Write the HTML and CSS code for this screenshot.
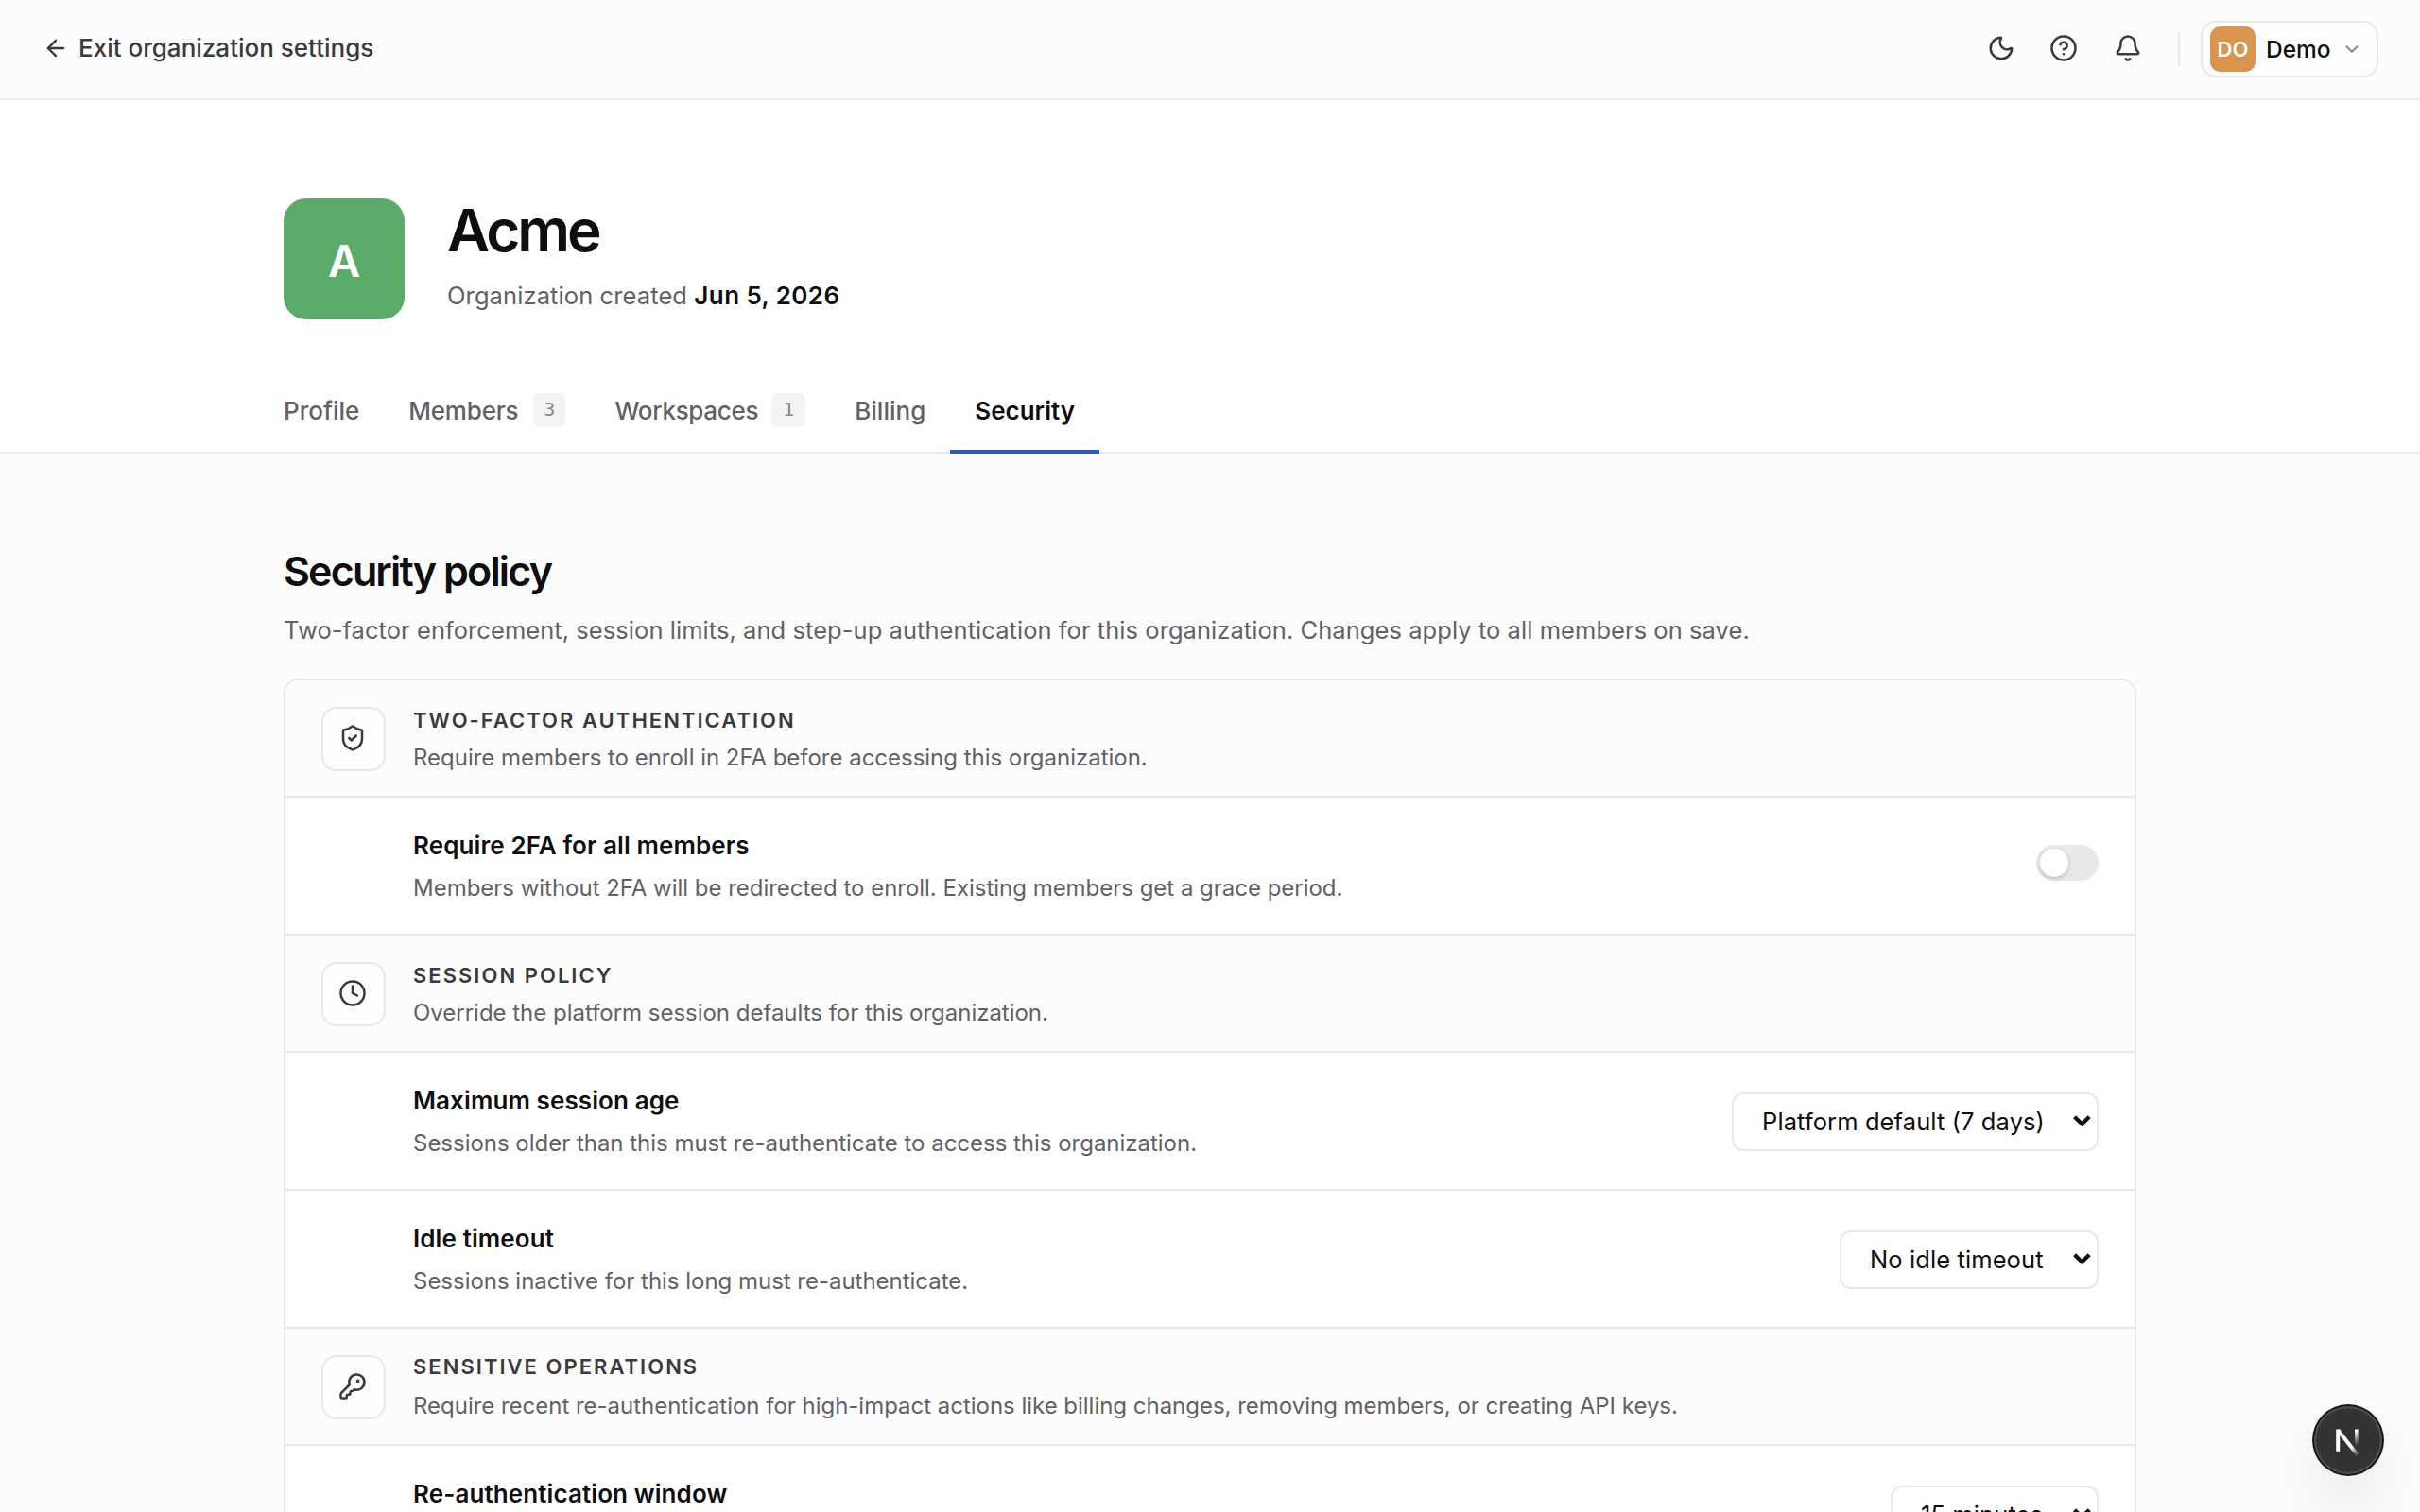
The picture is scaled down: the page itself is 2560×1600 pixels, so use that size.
FILE: index.html
```
<!DOCTYPE html>
<html lang="en">
<head>
    <meta charset="UTF-8">
    <meta name="viewport" content="width=device-width, initial-scale=1.0">
    <title>Organization security</title>
    <link rel="stylesheet" href="styles.css">
</head>
<body>
    <header class="topbar">
        <a class="exit-link">
            <svg class="icon icon-back" viewBox="0 0 24 24"><path d="m12 19-7-7 7-7"/><path d="M19 12H5"/></svg>
            Exit organization settings
        </a>
        <div class="topbar-actions">
            <svg class="icon" viewBox="0 0 24 24"><path d="M20.985 12.486a9 9 0 1 1-9.473-9.472c.405-.022.617.46.402.803a6 6 0 0 0 8.268 8.268c.344-.215.825-.004.803.401"/></svg>
            <svg class="icon icon-help" viewBox="0 0 24 24"><circle cx="12" cy="12" r="10"/><path d="M9.09 9a3 3 0 0 1 5.83 1c0 2-3 3-3 3"/><path d="M12 17h.01"/></svg>
            <svg class="icon icon-bell" viewBox="0 0 24 24"><path d="M10.268 21a2 2 0 0 0 3.464 0"/><path d="M3.262 15.326A1 1 0 0 0 4 17h16a1 1 0 0 0 .74-1.673C19.41 13.956 18 12.499 18 8A6 6 0 0 0 6 8c0 4.499-1.411 5.956-2.738 7.326"/></svg>
            <span class="divider"></span>
            <div class="user-menu">
                <span class="user-avatar">DO</span>
                <span class="user-name">Demo</span>
                <svg class="icon icon-chevron" viewBox="0 0 24 24"><path d="m6 9 6 6 6-6"/></svg>
            </div>
        </div>
    </header>

    <section class="hero">
        <div class="profile">
            <div class="org-avatar">A</div>
            <div class="org-text">
                <h1>Acme</h1>
                <p>Organization created <strong>Jun 5, 2026</strong></p>
            </div>
        </div>
        <nav class="tabs">
            <a class="tab">Profile</a>
            <a class="tab tab-members">Members <span class="count">3</span></a>
            <a class="tab tab-workspaces">Workspaces <span class="count count-wide">1</span></a>
            <a class="tab">Billing</a>
            <a class="tab active">Security</a>
        </nav>
    </section>

    <main class="content">
        <h2>Security policy</h2>
        <p class="lead">Two-factor enforcement, session limits, and step-up authentication for this organization. Changes apply to all members on save.</p>

        <div class="card">
            <div class="group">
                <div class="group-icon">
                    <svg class="icon" viewBox="0 0 24 24"><path d="M20 13c0 5-3.5 7.5-7.66 8.95a1 1 0 0 1-.67-.01C7.5 20.5 4 18 4 13V6a1 1 0 0 1 1-1c2 0 4.5-1.2 6.24-2.72a1.17 1.17 0 0 1 1.52 0C14.51 3.81 17 5 19 5a1 1 0 0 1 1 1z"/><path d="m9 12 2 2 4-4"/></svg>
                </div>
                <div class="group-text">
                    <h3>Two-factor authentication</h3>
                    <p>Require members to enroll in 2FA before accessing this organization.</p>
                </div>
            </div>
            <div class="row">
                <div class="row-text">
                    <h4>Require 2FA for all members</h4>
                    <p>Members without 2FA will be redirected to enroll. Existing members get a grace period.</p>
                </div>
                <div class="toggle"><span class="thumb"></span></div>
            </div>

            <div class="group">
                <div class="group-icon">
                    <svg class="icon" viewBox="0 0 24 24"><circle cx="12" cy="12" r="10"/><path d="M12 6v6l4 2"/></svg>
                </div>
                <div class="group-text">
                    <h3>Session policy</h3>
                    <p>Override the platform session defaults for this organization.</p>
                </div>
            </div>
            <div class="row">
                <div class="row-text">
                    <h4>Maximum session age</h4>
                    <p>Sessions older than this must re-authenticate to access this organization.</p>
                </div>
                <div class="select select-age">
                    Platform default (7 days)
                    <svg class="caret" viewBox="0 0 19 13"><path d="M1.6 1.8 9.4 9.4l7.8-7.6"/></svg>
                </div>
            </div>
            <div class="row">
                <div class="row-text">
                    <h4>Idle timeout</h4>
                    <p>Sessions inactive for this long must re-authenticate.</p>
                </div>
                <div class="select select-idle">
                    No idle timeout
                    <svg class="caret" viewBox="0 0 19 13"><path d="M1.6 1.8 9.4 9.4l7.8-7.6"/></svg>
                </div>
            </div>

            <div class="group group-sensitive">
                <div class="group-icon">
                    <svg class="icon" viewBox="0 0 24 24"><path d="M2.586 17.414A2 2 0 0 0 2 18.828V21a1 1 0 0 0 1 1h3a1 1 0 0 0 1-1v-1a1 1 0 0 1 1-1h1a1 1 0 0 0 1-1v-1a1 1 0 0 1 1-1h.172a2 2 0 0 0 1.414-.586l.814-.814a6.5 6.5 0 1 0-4-4z"/><circle cx="16.5" cy="7.5" r=".5" fill="currentColor"/></svg>
                </div>
                <div class="group-text">
                    <h3>Sensitive operations</h3>
                    <p>Require recent re-authentication for high-impact actions like billing changes, removing members, or creating API keys.</p>
                </div>
            </div>
            <div class="row row-window">
                <div class="row-text">
                    <h4>Re-authentication window</h4>
                </div>
                <div class="select select-window">
                    15 minutes
                    <svg class="caret" viewBox="0 0 19 13"><path d="M1.6 1.8 9.4 9.4l7.8-7.6"/></svg>
                </div>
            </div>
        </div>
    </main>

    <div class="dev-badge">
        <svg viewBox="0 0 72 72">
            <defs>
                <linearGradient id="fade-leg" gradientUnits="userSpaceOnUse" x1="36" y1="38" x2="47" y2="52">
                    <stop offset="0.35" stop-color="#fff"/>
                    <stop offset="1" stop-color="#fff" stop-opacity="0"/>
                </linearGradient>
                <linearGradient id="fade-bar" gradientUnits="userSpaceOnUse" x1="0" y1="24" x2="0" y2="42">
                    <stop offset="0.1" stop-color="#fff"/>
                    <stop offset="1" stop-color="#fff" stop-opacity="0"/>
                </linearGradient>
            </defs>
            <rect x="23.2" y="24.5" width="4" height="23.2" fill="#fff"/>
            <path d="M25.2 25.3 47 53" stroke="url(#fade-leg)" stroke-width="3.8"/>
            <rect x="43" y="24.5" width="3.6" height="18" fill="url(#fade-bar)"/>
        </svg>
    </div>
</body>
</html>
```
FILE: styles.css
```
* {
    box-sizing: border-box;
}
body {
    margin: 0;
    height: 100vh;
    overflow: hidden;
    background-color: #fcfcfc;
    color: #0e0e10;
    font-family: Inter, "Liberation Sans", sans-serif;
    font-size: 26px;
}
h1, h2, h3, h4, p {
    margin: 0;
    font-weight: 400;
}

.icon {
    display: block;
    width: 30px;
    height: 30px;
    fill: none;
    stroke: currentColor;
    stroke-width: 2;
    stroke-linecap: round;
    stroke-linejoin: round;
    color: #3a3a3d;
}

/* top bar */
.topbar {
    display: flex;
    justify-content: space-between;
    align-items: center;
    height: 106px;
    padding: 0 44px 0 45px;
    border-bottom: 2px solid #e8e8e8;
}
.exit-link {
    display: flex;
    align-items: center;
    gap: 10px;
    padding-bottom: 3px;
    font-weight: 500;
    color: #3a3a3d;
}
.icon-back {
    width: 28px;
    height: 28px;
}
.topbar-actions {
    display: flex;
    align-items: center;
}
.topbar-actions > .icon {
    margin-bottom: 2px;
}
.icon-help {
    margin-left: 36px;
}
.icon-bell {
    margin-left: 38px;
}
.divider {
    width: 2px;
    height: 36px;
    margin: 0 22px 0 38px;
    background-color: #e8e8e8;
}
.user-menu {
    display: flex;
    align-items: center;
    width: 188px;
    height: 60px;
    padding-left: 8px;
    border: 2px solid #e8e8e8;
    border-radius: 16px;
    background-color: #fdfdfd;
}
.user-avatar {
    display: flex;
    justify-content: center;
    align-items: center;
    width: 48px;
    height: 48px;
    border-radius: 11px;
    background-color: #d9944e;
    color: #fff;
    font-size: 22px;
    font-weight: 600;
}
.user-name {
    margin-left: 11px;
    padding-bottom: 1px;
    font-size: 24.5px;
    font-weight: 500;
}
.icon-chevron {
    width: 22px;
    height: 22px;
    margin-left: 11px;
    color: #85858a;
}

/* organization header */
.hero {
    height: 374px;
    padding: 104px 300px 0;
    background-color: #fff;
    border-bottom: 2px solid #e8e8e8;
}
.profile {
    display: flex;
    gap: 45px;
}
.org-avatar {
    display: flex;
    justify-content: center;
    align-items: center;
    width: 128px;
    height: 128px;
    padding-top: 2px;
    border-radius: 24px;
    background-color: #5bab6a;
    color: #fff;
    font-size: 47px;
    font-weight: 600;
}
.org-text {
    padding-top: 2px;
}
.org-text h1 {
    font-size: 62px;
    line-height: 64px;
    font-weight: 600;
    letter-spacing: -3px;
}
.org-text p {
    margin-top: 17px;
    font-size: 25.5px;
    line-height: 40px;
    letter-spacing: 0.1px;
    color: #616166;
}
.org-text strong {
    font-size: 26px;
    font-weight: 600;
    letter-spacing: 0.4px;
    color: #0e0e10;
}
.tabs {
    display: flex;
    margin: 54px 0 0 -26px;
}
.tab {
    display: flex;
    align-items: center;
    gap: 14px;
    height: 88px;
    padding: 0 26px;
    border-bottom: 4px solid transparent;
    font-weight: 500;
    color: #616166;
}
.tab-members {
    gap: 16px;
    letter-spacing: -0.2px;
}
.tab-workspaces {
    letter-spacing: -0.3px;
}
.tab.active {
    border-bottom-color: #2f5bc7;
    font-weight: 600;
    color: #0e0e10;
}
.count {
    width: 34px;
    height: 36px;
    border-radius: 7px;
    background-color: #f3f3f3;
    color: #8b8b90;
    font-family: "DejaVu Sans Mono", monospace;
    font-size: 20px;
    font-weight: 400;
    line-height: 34px;
    letter-spacing: 0;
    text-align: center;
}
.count-wide {
    width: 36px;
}

/* security policy */
.content {
    padding: 98px 300px 0;
}
.content h2 {
    font-size: 43px;
    line-height: 52px;
    font-weight: 600;
    letter-spacing: -1.85px;
}
.lead {
    margin-top: 17px;
    font-size: 25.5px;
    line-height: 40px;
    letter-spacing: 0.055px;
    color: #616166;
}
.card {
    margin-top: 31px;
    border: 2px solid #e8e8e8;
    border-radius: 16px;
    background-color: #fff;
    overflow: hidden;
}
.group {
    display: flex;
    gap: 29px;
    height: 124px;
    padding: 28px 38px 0;
    border-bottom: 2px solid #e8e8e8;
    background-color: #fcfcfc;
}
.group-icon {
    display: flex;
    justify-content: center;
    align-items: center;
    width: 68px;
    height: 68px;
    padding: 0 2px 2px 0;
    border: 2px solid #e8e8e8;
    border-radius: 16px;
    background-color: #fdfdfd;
}
.group-text {
    margin-top: -1px;
}
.group-text h3 {
    font-size: 22px;
    line-height: 30px;
    font-weight: 600;
    letter-spacing: 2.03px;
    text-transform: uppercase;
    color: #3a3a3d;
}
.group-text p {
    margin-top: 7px;
    font-size: 24px;
    line-height: 36px;
    letter-spacing: -0.02px;
    color: #616166;
}
.group-sensitive .group-text {
    margin-top: -3px;
}
.group-sensitive .group-text p {
    margin-top: 9px;
}
.row {
    display: flex;
    justify-content: space-between;
    align-items: center;
    height: 146px;
    padding: 0 38px 0 135px;
    border-bottom: 2px solid #e8e8e8;
}
.row-text {
    padding-top: 2px;
}
.row-text h4 {
    font-size: 26px;
    line-height: 36px;
    font-weight: 600;
    letter-spacing: 0.1px;
}
.row-text p {
    margin-top: 9px;
    font-size: 24px;
    line-height: 36px;
    letter-spacing: -0.02px;
    color: #616166;
}
.row-window {
    align-items: flex-start;
    padding-top: 40px;
}
.row-window .row-text {
    margin-top: -9px;
}
.toggle {
    width: 66px;
    height: 38px;
    margin-bottom: 6px;
    padding: 4px;
    border-radius: 19px;
    background-color: #e8e8e8;
}
.thumb {
    display: block;
    width: 30px;
    height: 30px;
    border-radius: 50%;
    background-color: #fff;
    box-shadow: 0 2px 5px rgba(0, 0, 0, 0.18);
}
.select {
    display: flex;
    justify-content: space-between;
    align-items: center;
    height: 62px;
    margin-top: 2px;
    padding: 0 6px 2px 30px;
    border: 2px solid #e8e8e8;
    border-radius: 12px;
    font-size: 25.5px;
    letter-spacing: 0.1px;
    white-space: nowrap;
}
.select-age {
    width: 388px;
}
.select-idle {
    width: 274px;
}
.select-window {
    width: 220px;
}
.caret {
    width: 19px;
    height: 13px;
    fill: none;
    stroke: #0e0e10;
    stroke-width: 4.2;
}

/* floating dev tools button */
.dev-badge {
    position: fixed;
    left: 2448px;
    top: 1488px;
    width: 72px;
    height: 72px;
    border-radius: 50%;
    background-color: #333;
    box-shadow: 0 0 0 2px #171717, inset 0 0 0 2px rgba(255, 255, 255, 0.14), 0 32px 64px -16px rgba(0, 0, 0, 0.24);
}
.dev-badge svg {
    display: block;
    width: 72px;
    height: 72px;
}
```
